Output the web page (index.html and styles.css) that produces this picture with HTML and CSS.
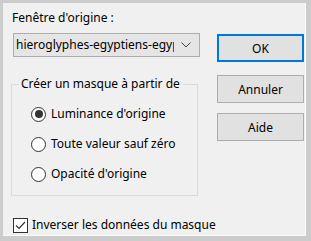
FILE: index.html
```html
<!DOCTYPE html>
<html lang="fr">
<head>
  <meta charset="utf-8" />
  <title>Masque</title>
  <link rel="stylesheet" href="styles.css">
</head>
<body>
  <div class="dialog">
    <div class="left">
      <div class="label">Fenêtre d'origine :</div>
      <div class="combo">
        <span class="combo-text">hieroglyphes-egyptiens-egypte-antique</span>
        <svg class="chevron" width="10" height="6" viewBox="0 0 10 6"><polyline points="0.5,0.5 5,5 9.5,0.5" fill="none" stroke="#444" stroke-width="1"/></svg>
      </div>
      <fieldset class="group">
        <legend>Créer un masque à partir de</legend>
        <div class="radio-row"><span class="radio checked"></span><span>Luminance d'origine</span></div>
        <div class="radio-row"><span class="radio"></span><span>Toute valeur sauf zéro</span></div>
        <div class="radio-row"><span class="radio"></span><span>Opacité d'origine</span></div>
      </fieldset>
    </div>
    <div class="right">
      <button type="button" class="btn btn-default">OK</button>
      <button type="button" class="btn btn-cancel">Annuler</button>
      <button type="button" class="btn btn-help">Aide</button>
    </div>
    <div class="check-row">
      <span class="checkbox"><svg width="13" height="13" viewBox="0 0 13 13"><polyline points="2,6.5 5,9.5 11,3" fill="none" stroke="#333" stroke-width="1.2"/></svg></span>
      <span>Inverser les données du masque</span>
    </div>
  </div>
</body>
</html>
```

FILE: styles.css
```css
*{box-sizing:border-box;}
body{margin:0;background:#cccccc;font-family:"Noto Sans",sans-serif;font-size:12px;color:#000;}
.dialog{
  width:303px;
  height:233px;
  margin:3px 0 0 3px;
  padding:7px 2px 0 8px;
  background:#f0f0f0;
  box-shadow:inset -1px -1px 0 #fafafa;
  display:grid;
  grid-template-columns:187px 87px;
  column-gap:19px;
  align-content:start;
}
.label{margin-left:1px;line-height:16px;}
.combo{
  margin:7px 0 0 2px;
  width:187px;
  height:24px;
  border:1px solid #adadad;
  background:#e5e5e5;
  display:flex;
  align-items:center;
  padding-left:2px;
  overflow:hidden;
}
.combo-text{flex:1;white-space:nowrap;overflow:hidden;line-height:16px;}
.chevron{flex:none;margin:0 8px 0 7px;}
.group{
  margin:19px 0 0;
  padding:7px 0 6px 0;
  border:1px solid #dcdcdc;
  min-inline-size:0;
}
.group legend{margin-left:7px;padding:0 2px;line-height:16px;white-space:nowrap;}
.radio-row{height:30px;padding-left:19px;display:flex;align-items:center;gap:5px;line-height:16px;}
.radio{
  width:15px;
  height:15px;
  border:1px solid #333;
  border-radius:50%;
  background:#fff;
  display:flex;
  align-items:center;
  justify-content:center;
}
.radio.checked::after{content:"";width:8px;height:8px;border-radius:50%;background:#333;}
.right{padding-top:24px;display:flex;flex-direction:column;}
.btn{
  width:87px;
  height:28px;
  border:1px solid #adadad;
  background:#e1e1e1;
  font:inherit;
  color:#000;
  padding:0;
}
.btn-default{border:2px solid #0078d7;}
.btn-cancel{margin-top:13px;}
.btn-help{margin-top:10px;}
.check-row{
  grid-column:1 / 3;
  margin:21px 0 0 2px;
  display:flex;
  align-items:center;
  gap:4px;
  line-height:16px;
  white-space:nowrap;
}
.checkbox{
  width:15px;
  height:15px;
  border:1px solid #333;
  background:#fff;
  display:flex;
  align-items:center;
  justify-content:center;
}
```
